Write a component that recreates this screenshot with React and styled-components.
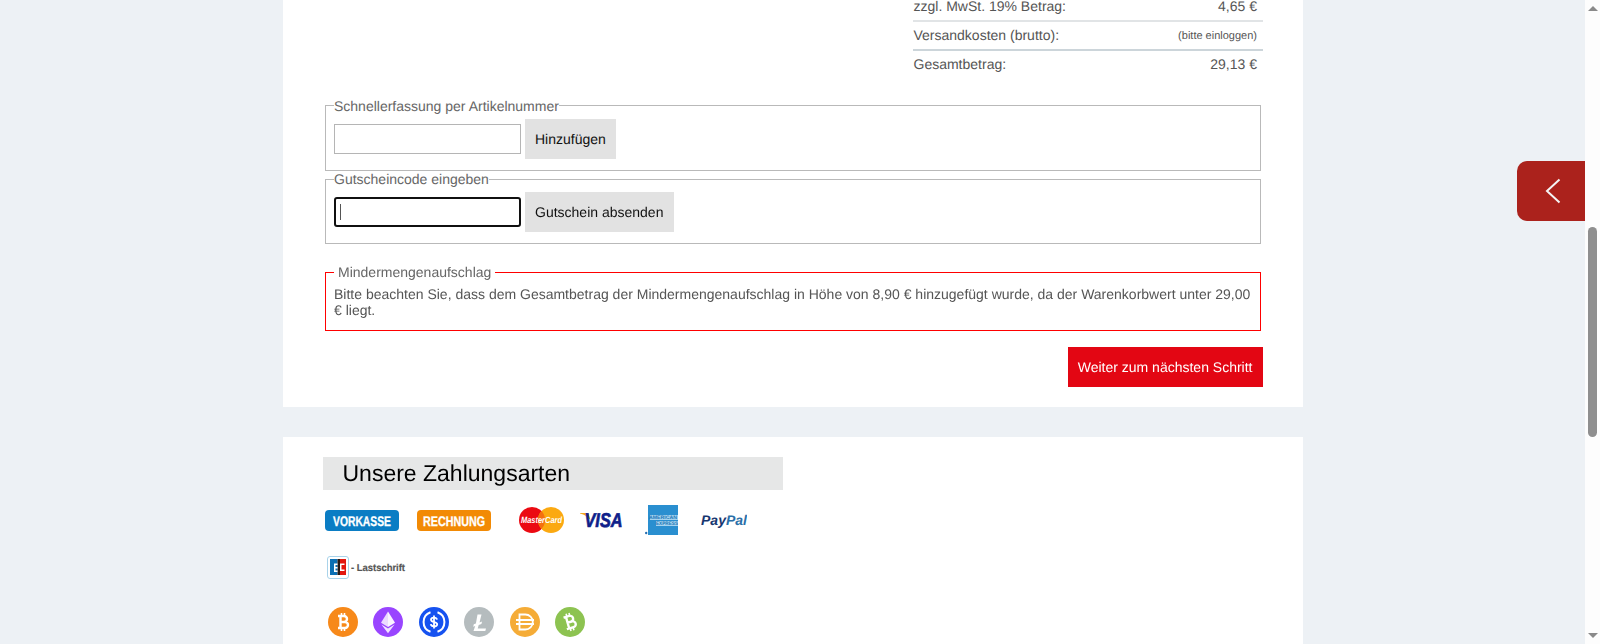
import React from "react";
import styled, { createGlobalStyle } from "styled-components";

const GlobalStyle = createGlobalStyle`
  html, body {
    margin: 0;
    height: 100%;
    overflow: hidden;
    background: #edf1f5;
  }
  body, input, button {
    font-family: "Liberation Sans", Arial, sans-serif;
    text-rendering: geometricPrecision;
  }
`;

const Page = styled.div`
  position: relative;
  display: flex;
  height: 644px;
  overflow: hidden;
`;

const Main = styled.main`
  flex: 1;
  min-width: 0;
`;

const Card = styled.section`
  width: 1020px;
  margin: 0 auto 30px;
  padding: ${(p) => p.$pad};
  box-sizing: border-box;
  background: #fff;
  color: #555;
  font-size: 14px;
`;

const Totals = styled.div`
  width: 350px;
  margin: -7px 0 0 auto;
`;

const TotalRow = styled.div`
  display: flex;
  justify-content: space-between;
  align-items: center;
  height: 26px;
  padding: 0 5.5px 1px 1px;
  border-bottom: 2px solid ${(p) => p.$line || "transparent"};
  line-height: 16px;
`;

const Hint = styled.span`
  padding-top: 2px;
  font-size: 11px;
`;

const Fieldset = styled.fieldset`
  margin: ${(p) => p.$margin || "0 2px"};
  padding: ${(p) => p.$pad || "5px 8px 11px"};
  min-width: 0;
  border: 1px solid ${(p) => (p.$alert ? "#f00" : "#b9b9b9")};
  line-height: 16px;
`;

const Legend = styled.legend`
  height: ${(p) => (p.$tight ? "14px" : "16px")};
  padding: ${(p) => (p.$alert ? "0 4px" : "0 0 0 .5px")};
  font-size: 14px;
  line-height: 16px;
  color: #666;
`;

const EntryRow = styled.div`
  display: flex;
  align-items: center;
  gap: 4px;
`;

const CodeInput = styled.input`
  width: 187px;
  height: 30px;
  box-sizing: border-box;
  padding: 1px 5px;
  border: 1px solid #b5b5b5;
  background: #fff;
  font-size: 14px;

  &:focus {
    border: 0;
    border-radius: 3px;
    outline: 2px solid #101010;
    outline-offset: -2px;
    caret-color: transparent;
    background: linear-gradient(#555, #555) no-repeat 6px 7px / 1px 16px #fff;
  }
`;

const GreyButton = styled.button`
  height: 40px;
  padding: 0 10.5px;
  border: 0;
  background: #e2e2e2;
  color: #111;
  font-size: 14px;
`;

const Actions = styled.div`
  display: flex;
  justify-content: flex-end;
  margin-top: 16px;
`;

const NextButton = styled.button`
  height: 40px;
  padding: 0 10px;
  border: 0;
  background: #e30613;
  color: #fff;
  font-size: 14px;
`;

const Heading = styled.h2`
  width: 460px;
  height: 33px;
  margin: 0;
  padding-left: 20px;
  box-sizing: border-box;
  background: #e6e7e7;
  color: #000;
  font-size: 23px;
  font-weight: 400;
  line-height: 33px;
`;

const LogoRow = styled.div`
  display: flex;
  align-items: center;
  margin-top: ${(p) => p.$top};
  padding-left: ${(p) => p.$left};
  gap: ${(p) => p.$gap || 0};
`;

const LogoSvg = styled.svg`
  display: block;
  flex: none;
  margin-left: ${(p) => p.$gap || 0};
`;

const Coin = styled.span`
  display: flex;
  flex: none;
  align-items: center;
  justify-content: center;
  width: 30px;
  height: 30px;
  border-radius: 50%;
  background: ${(p) => p.$bg};
  color: #fff;
`;

const Scrollbar = styled.div`
  display: flex;
  flex: none;
  flex-direction: column;
  align-items: center;
  width: 15px;
  padding-top: 6px;
  box-sizing: border-box;
  background: #fdfdfd;
`;

const ArrowUp = styled.span`
  width: 0;
  height: 0;
  border-left: 5px solid transparent;
  border-right: 5px solid transparent;
  border-bottom: 5px solid #8a8a8a;
`;

const ArrowDown = styled(ArrowUp)`
  margin-top: 196px;
  border-bottom: 0;
  border-top: 5px solid #8a8a8a;
`;

const Thumb = styled.div`
  width: 9px;
  height: 210px;
  margin-top: 216px;
  border-radius: 5px;
  background: #8f8f8f;
`;

const SideTab = styled.button`
  position: absolute;
  top: 161px;
  right: 15px;
  display: flex;
  align-items: center;
  justify-content: center;
  width: 68px;
  height: 60px;
  padding: 0 0 0 3px;
  border: 0;
  border-radius: 10px 0 0 10px;
  background: #ab221c;
`;

function Vorkasse() {
  return (
    <LogoSvg width="74" height="21" viewBox="0 0 74 21">
      <rect width="74" height="21" rx="4" fill="#0b7dc4" />
      <text x="37" y="15.5" textAnchor="middle" textLength="58" lengthAdjust="spacingAndGlyphs" fontSize="14" fontWeight="700" fill="#fff" stroke="#fff" strokeWidth=".3">VORKASSE</text>
    </LogoSvg>
  );
}

function Rechnung() {
  return (
    <LogoSvg $gap="18px" width="74" height="21" viewBox="0 0 74 21">
      <rect width="74" height="21" rx="4" fill="#f28a05" />
      <text x="37" y="15.5" textAnchor="middle" textLength="62" lengthAdjust="spacingAndGlyphs" fontSize="14" fontWeight="700" fill="#fff" stroke="#fff" strokeWidth=".3">RECHNUNG</text>
    </LogoSvg>
  );
}

function MasterCard() {
  return (
    <LogoSvg $gap="28px" width="45" height="28" viewBox="0 0 45 28">
      <circle cx="13" cy="14" r="13" fill="#eb0a12" />
      <circle cx="32" cy="14" r="13" fill="#fba911" />
      <path d="M22.5 5.1a13 13 0 0 1 0 17.8a13 13 0 0 1 0-17.8z" fill="#f4700f" />
      <text x="22.5" y="17" textAnchor="middle" textLength="41" lengthAdjust="spacingAndGlyphs" fontSize="9" fontWeight="700" fontStyle="italic" fill="#fff">MasterCard</text>
    </LogoSvg>
  );
}

function Visa() {
  return (
    <LogoSvg $gap="16px" width="43" height="20" viewBox="0 0 43 20">
      <path d="M0 3h6.5c1.4 0 2 .6 2.3 1.7L10.5 10C8 7 4.5 4.8 0 3.6z" fill="#f2a81d" />
      <text x="4.5" y="17" textLength="38" lengthAdjust="spacingAndGlyphs" fontSize="20" fontWeight="700" fontStyle="italic" fill="#0f1f8a" stroke="#0f1f8a" strokeWidth=".7">VISA</text>
    </LogoSvg>
  );
}

function Amex() {
  return (
    <LogoSvg $gap="22px" width="33" height="30" viewBox="0 0 33 30">
      <rect x="3" width="30" height="30" fill="#2a8fd0" />
      <rect x="5" y="10" width="28" height="5" fill="#a5d3ef" />
      <rect x="11" y="16" width="22" height="5" fill="#a5d3ef" />
      <text x="4" y="14.4" textLength="28" lengthAdjust="spacingAndGlyphs" fontSize="5" fontWeight="700" fill="#1d78b8">AMERICAN</text>
      <text x="11" y="20.4" textLength="22" lengthAdjust="spacingAndGlyphs" fontSize="5" fontWeight="700" fill="#1d78b8">EXPRESS</text>
      <circle cx="1.2" cy="28" r="1.2" fill="#2a6fb0" />
    </LogoSvg>
  );
}

function PayPal() {
  return (
    <LogoSvg $gap="23px" width="46" height="16" viewBox="0 0 46 16">
      <text y="12.5" fontSize="14" fontWeight="700" fontStyle="italic" textLength="46" lengthAdjust="spacingAndGlyphs">
        <tspan fill="#17366f">Pay</tspan>
        <tspan fill="#2a6fa8">Pal</tspan>
      </text>
    </LogoSvg>
  );
}

function Lastschrift() {
  return (
    <LogoSvg width="80" height="23" viewBox="0 0 80 23">
      <rect x=".5" y=".5" width="21" height="22" rx="2.5" fill="#fff" stroke="#a9d3ea" />
      <rect x="3" y="3" width="7.5" height="16" fill="#0b6fb3" />
      <rect x="10.5" y="3" width="2.5" height="16" fill="#2a1a14" />
      <rect x="13" y="3" width="6" height="16" fill="#e3170f" />
      <path d="M7 7.5h3.5V9h-2v2h2v1.5h-2v2h2V16H7z" fill="#fff" />
      <path d="M13 7.5h4.5V9h-3v4.5h3V15H13z" fill="#fff" />
      <text x="24" y="15" textLength="54" lengthAdjust="spacingAndGlyphs" fontSize="10" fontWeight="700" fill="#555" stroke="#555" strokeWidth=".2">- Lastschrift</text>
    </LogoSvg>
  );
}

function CoinSvg({ children }) {
  return (
    <svg width="30" height="30" viewBox="0 0 30 30">
      {children}
    </svg>
  );
}

function BitcoinMark({ turn }) {
  return (
    <CoinSvg>
      <g transform={`rotate(${turn} 15 15)`} fill="none" stroke="#fff">
        <path d="M12.5 9v12M10 9h6a3 3 0 0 1 0 6h-3.5M12.5 15h4.5a3 3 0 0 1 0 6h-7" strokeWidth="2.4" />
        <path d="M13.5 6v3M16.5 6v3M13.5 21v3M16.5 21v3" strokeWidth="1.6" />
      </g>
    </CoinSvg>
  );
}

function Coins() {
  return (
    <LogoRow $top="28px" $left="5px" $gap="15.6px">
      <Coin $bg="#f7891a"><BitcoinMark turn={0} /></Coin>
      <Coin $bg="#9945ff">
        <CoinSvg>
          <path d="M15 4.5l-7 11.3 7 4.1z" fill="#fff" opacity=".8" />
          <path d="M15 4.5l7 11.3-7 4.1z" fill="#fff" opacity=".95" />
          <path d="M8.4 17.4l6.6 4 6.6-4-6.6 8.8z" fill="#fff" opacity=".85" />
        </CoinSvg>
      </Coin>
      <Coin $bg="#1652f0">
        <CoinSvg>
          <path d="M11.5 5.2a10.4 10.4 0 0 0 0 19.6M18.5 5.2a10.4 10.4 0 0 1 0 19.6" fill="none" stroke="#fff" strokeWidth="2" />
          <path d="M18 12.6c-.3-1.3-1.5-2-3-2-1.7 0-3 .9-3 2.2 0 3.2 6.2 1.4 6.2 4.4 0 1.4-1.4 2.2-3.2 2.2-1.7 0-3-.9-3.2-2.2M15 8.5v13" fill="none" stroke="#fff" strokeWidth="1.8" />
        </CoinSvg>
      </Coin>
      <Coin $bg="#b5bcbe">
        <CoinSvg>
          <path d="M13.5 7.5h4l-2 8 2.6-1-.7 2.6-2.7 1-1 3.4h8.3l-.7 2.5H9.5l1.7-5.1-2 .8.6-2.4 2.1-.8z" fill="#fff" />
        </CoinSvg>
      </Coin>
      <Coin $bg="#f5ac37">
        <CoinSvg>
          <path d="M9.5 7.5h5.8a7.5 7.5 0 0 1 0 15H9.5z" fill="none" stroke="#fff" strokeWidth="1.8" />
          <path d="M6 13h18M6 17h18" fill="none" stroke="#fff" strokeWidth="1.8" />
        </CoinSvg>
      </Coin>
      <Coin $bg="#8dc351"><BitcoinMark turn={-16} /></Coin>
    </LogoRow>
  );
}

export default function App() {
  return (
    <Page>
      <GlobalStyle />
      <Main>
        <Card $pad="0 40px 20px">
          <Totals>
            <TotalRow $line="#e1e4e6">
              <span>zzgl. MwSt. 19% Betrag:</span>
              <span>4,65 €</span>
            </TotalRow>
            <TotalRow $line="#ccd5da">
              <span>Versandkosten (brutto):</span>
              <Hint>(bitte einloggen)</Hint>
            </TotalRow>
            <TotalRow>
              <span>Gesamtbetrag:</span>
              <span>29,13 €</span>
            </TotalRow>
          </Totals>

          <Fieldset $margin="18px 2px 0" $pad="7px 8px 11px">
            <Legend $tight>Schnellerfassung per Artikelnummer</Legend>
            <EntryRow>
              <CodeInput />
              <GreyButton>Hinzufügen</GreyButton>
            </EntryRow>
          </Fieldset>
          <Fieldset>
            <Legend>Gutscheincode eingeben</Legend>
            <EntryRow>
              <CodeInput autoFocus />
              <GreyButton>Gutschein absenden</GreyButton>
            </EntryRow>
          </Fieldset>

          <Fieldset $alert $margin="20px 2px 0" $pad="6px 7px 12px 8.5px">
            <Legend $alert>Mindermengenaufschlag</Legend>
            Bitte beachten Sie, dass dem Gesamtbetrag der Mindermengenaufschlag in Höhe von 8,90 € hinzugefügt wurde, da der Warenkorbwert unter 29,00 € liegt.
          </Fieldset>

          <Actions>
            <NextButton>Weiter zum nächsten Schritt</NextButton>
          </Actions>
        </Card>

        <Card $pad="20px 40px">
          <Heading>Unsere Zahlungsarten</Heading>
          <LogoRow $top="15px" $left="2px">
            <Vorkasse />
            <Rechnung />
            <MasterCard />
            <Visa />
            <Amex />
            <PayPal />
          </LogoRow>
          <LogoRow $top="21px" $left="4px">
            <Lastschrift />
          </LogoRow>
          <Coins />
        </Card>
      </Main>

      <Scrollbar>
        <ArrowUp />
        <Thumb />
        <ArrowDown />
      </Scrollbar>

      <SideTab aria-label="Seitenleiste öffnen">
        <svg width="16" height="26" viewBox="0 0 16 26">
          <path d="M14.5 1.5L2 13l12.5 11.5" fill="none" stroke="#f4f4f4" strokeWidth="2" />
        </svg>
      </SideTab>
    </Page>
  );
}
